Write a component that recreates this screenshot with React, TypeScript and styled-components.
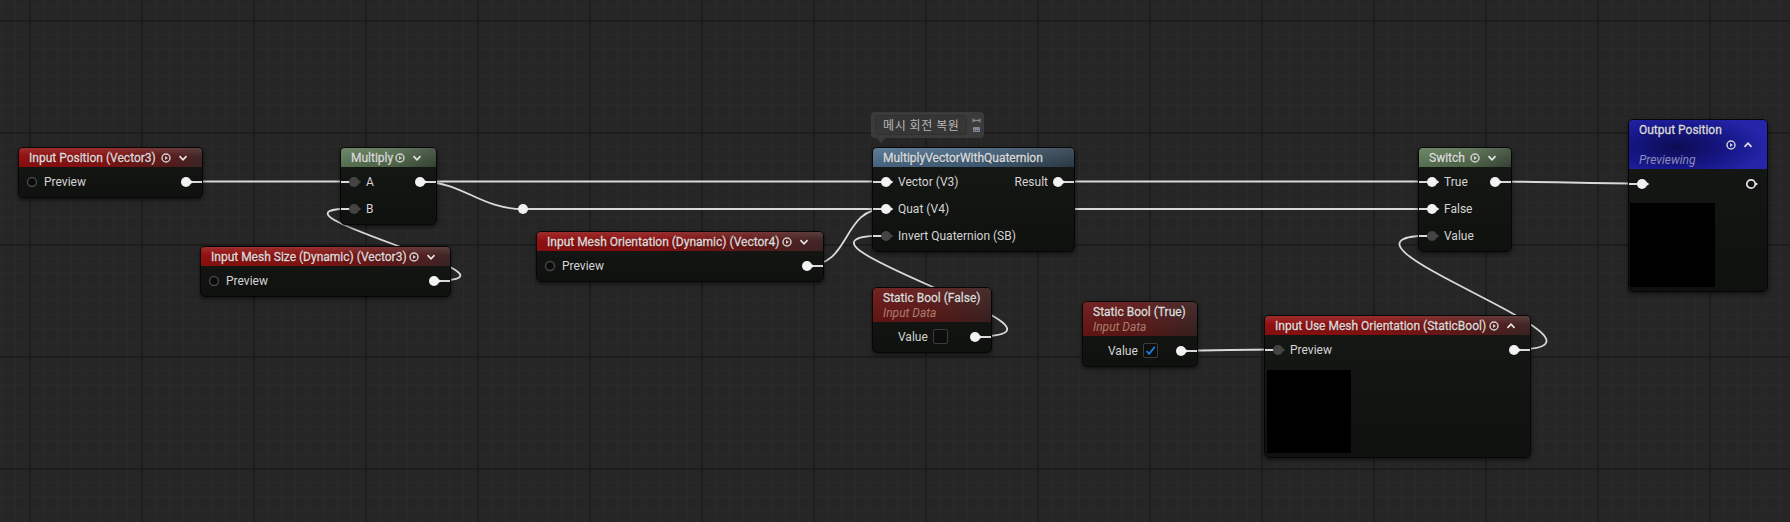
import styled, { createGlobalStyle } from 'styled-components';

type Tone = 'input' | 'static' | 'math' | 'func' | 'output';
type PinKind = 'live' | 'idle' | 'empty' | 'ring';
type Side = 'in' | 'out';

const GlobalStyle = createGlobalStyle`
	html, body {
		margin: 0;
		padding: 0;
		background: #262626;
		overflow: hidden;
	}
	* {
		box-sizing: border-box;
	}
`;

const tones: Record<Tone, string> = {
	input:
		'linear-gradient(180deg, rgba(255,255,255,0.12), rgba(255,255,255,0) 45%, rgba(0,0,0,0.1)), linear-gradient(90deg, #931010 0%, #8a1313 45%, #5e1c1c 80%, #402626 100%)',
	static:
		'linear-gradient(180deg, rgba(255,255,255,0.06), rgba(0,0,0,0.1)), linear-gradient(90deg, #6c1515 0%, #5d1818 50%, #3c2222 100%)',
	math: 'linear-gradient(180deg, rgba(255,255,255,0.1), rgba(0,0,0,0.1)), linear-gradient(90deg, #5d7b56 0%, #516b4b 55%, #3b4939 100%)',
	func: 'linear-gradient(180deg, rgba(255,255,255,0.1), rgba(0,0,0,0.1)), linear-gradient(90deg, #4d6d8b 0%, #42617d 50%, #2f3e4c 100%)',
	output:
		'radial-gradient(ellipse 65% 70% at 35% 55%, #0c0c52 0%, #17178a 60%, #2525aa 100%)'
};

const Canvas = styled.div`
	position: relative;
	width: 100%;
	height: 100vh;
	overflow: hidden;
	font-family: Roboto, 'Noto Sans', 'Liberation Sans', sans-serif;
	background-color: #262626;
	background-image: linear-gradient(to right, #1d1d1d 0 2px, transparent 2px),
		linear-gradient(to bottom, #1d1d1d 0 2px, transparent 2px),
		linear-gradient(to right, #2a2a2a 0 1px, transparent 1px),
		linear-gradient(to bottom, #2a2a2a 0 1px, transparent 1px);
	background-size: 112px 112px, 112px 112px, 14px 14px, 14px 14px;
	background-position: 29px 20px, 29px 20px, 1px 6px, 1px 6px;
`;

const WireLayer = styled.svg`
	position: absolute;
	inset: 0;
	width: 100%;
	height: 100%;
	pointer-events: none;
`;

const NodeBox = styled.div<{ $x: number; $y: number; $w: number }>`
	position: absolute;
	left: ${(p) => p.$x}px;
	top: ${(p) => p.$y}px;
	width: ${(p) => p.$w}px;
	border: 1px solid #060606;
	border-radius: 5px;
	overflow: hidden;
	background: linear-gradient(180deg, #161816, #0f110f);
	box-shadow: 0 2px 5px rgba(0, 0, 0, 0.55);
`;

const Header = styled.div<{ $tone: Tone; $h: number }>`
	height: ${(p) => p.$h}px;
	padding-left: 10px;
	display: flex;
	flex-direction: column;
	justify-content: center;
	background: ${(p) => tones[p.$tone]};
`;

const HeaderLine = styled.div`
	height: 15px;
	display: flex;
	align-items: center;
`;

const NodeTitle = styled.span`
	font-size: 12px;
	font-weight: 400;
	color: #dadada;
	white-space: nowrap;
	-webkit-text-stroke: 0.3px #dadada;
	text-shadow: 0 1px 1px rgba(0, 0, 0, 0.35);
`;

const NodeSub = styled.span<{ $tone: Tone }>`
	font-size: 12px;
	font-style: italic;
	white-space: nowrap;
	color: ${(p) => (p.$tone === 'output' ? '#8b8bb8' : '#a87f6b')};
`;

const HeaderIcons = styled.div`
	margin-left: auto;
	padding-right: 14px;
	display: flex;
	align-items: center;
	gap: 7px;
`;

const Body = styled.div<{ $pb?: number }>`
	padding: 1px 0 ${(p) => p.$pb ?? 2}px;
`;

const Row = styled.div`
	height: 27px;
	display: flex;
	align-items: center;
`;

const Spacer = styled.div`
	flex: 1;
`;

const Label = styled.span`
	font-size: 12px;
	color: #d4d4d4;
	white-space: nowrap;
`;

const PinSlot = styled.span<{ $side: Side; $wired?: boolean; $hidden?: boolean }>`
	position: relative;
	display: inline-flex;
	flex: none;
	width: 14px;
	height: 12px;
	margin: ${(p) => (p.$side === 'in' ? '0 4px 0 7px' : '0 8px 0 4px')};
	visibility: ${(p) => (p.$hidden ? 'hidden' : 'visible')};

	&::before {
		content: '';
		display: ${(p) => (p.$wired ? 'block' : 'none')};
		position: absolute;
		top: 5px;
		height: 2px;
		background: #d9d9d9;
		left: ${(p) => (p.$side === 'in' ? '-8px' : '6px')};
		width: ${(p) => (p.$side === 'in' ? '14px' : '18px')};
	}

	svg {
		position: relative;
	}
`;

const Checkbox = styled.span`
	width: 15px;
	height: 15px;
	margin-left: 5px;
	border: 1px solid #3c3c3c;
	border-radius: 2px;
	background: #0d0d0d;
	display: inline-flex;
	align-items: center;
	justify-content: center;
`;

const PreviewBox = styled.div<{ $w: number; $h: number; $mt: number; $ml: number }>`
	width: ${(p) => p.$w}px;
	height: ${(p) => p.$h}px;
	margin: ${(p) => p.$mt}px 0 0 ${(p) => p.$ml}px;
	background: #000;
`;

const Comment = styled.div`
	position: absolute;
	left: 871px;
	top: 112px;
	width: 113px;
	height: 26px;
	padding: 0 3px 0 4px;
	border-radius: 4px;
	background: #3b3b3b;
	display: flex;
	align-items: center;
	gap: 5px;

	&::after {
		content: '';
		position: absolute;
		left: 6px;
		bottom: -5px;
		border-left: 4px solid transparent;
		border-right: 4px solid transparent;
		border-top: 5px solid #3b3b3b;
	}
`;

const CommentText = styled.div`
	width: 92px;
	height: 20px;
	padding-left: 7px;
	border: 1px solid #303030;
	border-radius: 3px;
	background: #363636;
	color: #b8b8b8;
	font-family: 'Noto Sans CJK KR', 'Noto Sans', sans-serif;
	font-size: 12px;
	line-height: 18px;
	letter-spacing: 0.6px;
	white-space: nowrap;
`;

const Pin = ({ kind }: { kind: PinKind }) => {
	if (kind === 'empty') {
		return (
			<svg width="14" height="12" viewBox="0 0 14 12">
				<circle cx="6" cy="6" r="4.5" fill="#0b0b0b" stroke="#474747" strokeWidth="1.4" />
			</svg>
		);
	}
	if (kind === 'ring') {
		return (
			<svg width="14" height="12" viewBox="0 0 14 12">
				<circle cx="6" cy="6" r="4.2" fill="#111" stroke="#e6e6e6" strokeWidth="1.7" />
				<path d="M10.6 4.2 L13 6 L10.6 7.8 Z" fill="#e6e6e6" />
			</svg>
		);
	}
	const c = kind === 'live' ? '#f2f2f2' : '#444';
	return (
		<svg width="14" height="12" viewBox="0 0 14 12">
			<circle cx="6" cy="6" r="5" fill={c} />
			<path d="M10.3 3.8 L13.3 6 L10.3 8.2 Z" fill={c} />
		</svg>
	);
};

const PreviewIcon = () => (
	<svg width="10" height="10" viewBox="0 0 10 10">
		<circle cx="5" cy="5" r="4" fill="none" stroke="#cfcfcf" strokeWidth="1.5" />
		<path d="M4 3 L7 5 L4 7 Z" fill="#cfcfcf" />
	</svg>
);

const Chevron = ({ up }: { up?: boolean }) => (
	<svg width="10" height="10" viewBox="0 0 10 10">
		<path
			d={up ? 'M1.5 6.8 L5 3.2 L8.5 6.8' : 'M1.5 3.2 L5 6.8 L8.5 3.2'}
			fill="none"
			stroke="#e4e4e4"
			strokeWidth="1.7"
		/>
	</svg>
);

const CheckMark = () => (
	<svg width="11" height="11" viewBox="0 0 11 11">
		<path d="M1.5 6 L4.2 8.8 L9.8 1.8" fill="none" stroke="#1d7ee6" strokeWidth="1.8" />
	</svg>
);

const CommentIcons = () => (
	<svg width="9" height="20" viewBox="0 0 9 20">
		<path d="M1 3.5 L1 7.5 M8 3.5 L8 7.5 M1 5.5 L8 5.5" stroke="#8a8a8a" strokeWidth="1.2" />
		<path d="M2.6 4.2 L3.8 5.5 L2.6 6.8 M6.4 4.2 L5.2 5.5 L6.4 6.8" fill="none" stroke="#8a8a8a" strokeWidth="0.9" />
		<rect x="1" y="12" width="7" height="5" rx="0.8" fill="#7e8894" />
		<path d="M2 15.5 L7 15.5" stroke="#3b3b3b" strokeWidth="0.9" strokeDasharray="1 1" />
	</svg>
);

// wire shape, tangents the way the graph editor bends them
const spline = (x0: number, y0: number, x1: number, y1: number) => {
	const dx = x1 - x0;
	const dy = Math.abs(y1 - y0);
	const t =
		dx >= 0
			? (Math.min(dx, 1000) + Math.min(dy, 1000)) / 3
			: (Math.min(-dx, 200) * 3 + Math.min(dy, 200) * 1.5) / 3;
	return `M${x0} ${y0} C${x0 + t} ${y0}, ${x1 - t} ${y1}, ${x1} ${y1}`;
};

const wires: [number, number, number, number][] = [
	[186, 181.5, 354, 181.5],
	[420, 181.5, 886, 181.5],
	[420, 181.5, 523, 209],
	[523, 209, 1432, 209],
	[1058, 181.5, 1432, 181.5],
	[434, 280.5, 354, 208.5],
	[807, 265.5, 886, 208.5],
	[975, 336.5, 886, 235.5],
	[1181, 350.5, 1278, 349.5],
	[1514, 349.5, 1432, 235.5],
	[1495, 181.5, 1642, 183.5]
];

const InPin = ({ kind, wired }: { kind: PinKind; wired?: boolean }) => (
	<PinSlot $side="in" $wired={wired}>
		<Pin kind={kind} />
	</PinSlot>
);

const OutPin = ({ kind = 'live', wired = true }: { kind?: PinKind; wired?: boolean }) => (
	<PinSlot $side="out" $wired={wired}>
		<Pin kind={kind} />
	</PinSlot>
);

const TitleBar = ({ tone, title, up }: { tone: Tone; title: string; up?: boolean }) => (
	<Header $tone={tone} $h={19}>
		<HeaderLine>
			<NodeTitle>{title}</NodeTitle>
			<HeaderIcons>
				<PreviewIcon />
				<Chevron up={up} />
			</HeaderIcons>
		</HeaderLine>
	</Header>
);

const App = () => {
	return (
		<>
			<GlobalStyle />
			<Canvas>
				<WireLayer>
					{wires.map(([x0, y0, x1, y1], i) => (
						<path
							key={i}
							d={spline(x0, y0, x1, y1)}
							fill="none"
							stroke="#d9d9d9"
							strokeWidth="1.8"
						/>
					))}
					<circle cx="523" cy="209" r="5" fill="#f0f0f0" />
				</WireLayer>

				<Comment>
					<CommentText>메시 회전 복원</CommentText>
					<CommentIcons />
				</Comment>

				<NodeBox $x={18} $y={147} $w={185}>
					<TitleBar tone="input" title="Input Position (Vector3)" />
					<Body>
						<Row>
							<InPin kind="empty" />
							<Label>Preview</Label>
							<Spacer />
							<OutPin />
						</Row>
					</Body>
				</NodeBox>

				<NodeBox $x={340} $y={147} $w={97}>
					<TitleBar tone="math" title="Multiply" />
					<Body>
						<Row>
							<InPin kind="idle" wired />
							<Label>A</Label>
							<Spacer />
							<OutPin />
						</Row>
						<Row>
							<InPin kind="idle" wired />
							<Label>B</Label>
						</Row>
					</Body>
				</NodeBox>

				<NodeBox $x={200} $y={246} $w={251}>
					<TitleBar tone="input" title="Input Mesh Size (Dynamic) (Vector3)" />
					<Body>
						<Row>
							<InPin kind="empty" />
							<Label>Preview</Label>
							<Spacer />
							<OutPin />
						</Row>
					</Body>
				</NodeBox>

				<NodeBox $x={536} $y={231} $w={288}>
					<TitleBar tone="input" title="Input Mesh Orientation (Dynamic) (Vector4)" />
					<Body>
						<Row>
							<InPin kind="empty" />
							<Label>Preview</Label>
							<Spacer />
							<OutPin />
						</Row>
					</Body>
				</NodeBox>

				<NodeBox $x={872} $y={147} $w={203}>
					<Header $tone="func" $h={19}>
						<HeaderLine>
							<NodeTitle>MultiplyVectorWithQuaternion</NodeTitle>
						</HeaderLine>
					</Header>
					<Body>
						<Row>
							<InPin kind="live" wired />
							<Label>Vector (V3)</Label>
							<Spacer />
							<Label>Result</Label>
							<OutPin />
						</Row>
						<Row>
							<InPin kind="live" wired />
							<Label>Quat (V4)</Label>
						</Row>
						<Row>
							<InPin kind="idle" wired />
							<Label>Invert Quaternion (SB)</Label>
						</Row>
					</Body>
				</NodeBox>

				<NodeBox $x={872} $y={287} $w={120}>
					<Header $tone="static" $h={34}>
						<HeaderLine>
							<NodeTitle>Static Bool (False)</NodeTitle>
						</HeaderLine>
						<HeaderLine>
							<NodeSub $tone="static">Input Data</NodeSub>
						</HeaderLine>
					</Header>
					<Body>
						<Row>
							<PinSlot $side="in" $hidden>
								<Pin kind="empty" />
							</PinSlot>
							<Label>Value</Label>
							<Checkbox />
							<Spacer />
							<OutPin />
						</Row>
					</Body>
				</NodeBox>

				<NodeBox $x={1082} $y={301} $w={116}>
					<Header $tone="static" $h={34}>
						<HeaderLine>
							<NodeTitle>Static Bool (True)</NodeTitle>
						</HeaderLine>
						<HeaderLine>
							<NodeSub $tone="static">Input Data</NodeSub>
						</HeaderLine>
					</Header>
					<Body>
						<Row>
							<PinSlot $side="in" $hidden>
								<Pin kind="empty" />
							</PinSlot>
							<Label>Value</Label>
							<Checkbox>
								<CheckMark />
							</Checkbox>
							<Spacer />
							<OutPin />
						</Row>
					</Body>
				</NodeBox>

				<NodeBox $x={1418} $y={147} $w={94}>
					<TitleBar tone="math" title="Switch" />
					<Body>
						<Row>
							<InPin kind="live" wired />
							<Label>True</Label>
							<Spacer />
							<OutPin />
						</Row>
						<Row>
							<InPin kind="live" wired />
							<Label>False</Label>
						</Row>
						<Row>
							<InPin kind="idle" wired />
							<Label>Value</Label>
						</Row>
					</Body>
				</NodeBox>

				<NodeBox $x={1264} $y={315} $w={267}>
					<TitleBar tone="input" title="Input Use Mesh Orientation (StaticBool)" up />
					<Body $pb={4}>
						<Row>
							<InPin kind="idle" wired />
							<Label>Preview</Label>
							<Spacer />
							<OutPin />
						</Row>
						<PreviewBox $w={84} $h={83} $mt={7} $ml={2} />
					</Body>
				</NodeBox>

				<NodeBox $x={1628} $y={119} $w={140}>
					<Header $tone="output" $h={49}>
						<HeaderLine>
							<NodeTitle>Output Position</NodeTitle>
						</HeaderLine>
						<HeaderLine>
							<HeaderIcons>
								<PreviewIcon />
								<Chevron up />
							</HeaderIcons>
						</HeaderLine>
						<HeaderLine>
							<NodeSub $tone="output">Previewing</NodeSub>
						</HeaderLine>
					</Header>
					<Body $pb={4}>
						<Row>
							<InPin kind="live" wired />
							<Spacer />
							<OutPin kind="ring" wired={false} />
						</Row>
						<PreviewBox $w={85} $h={84} $mt={6} $ml={1} />
					</Body>
				</NodeBox>
			</Canvas>
		</>
	);
};

export default App;
